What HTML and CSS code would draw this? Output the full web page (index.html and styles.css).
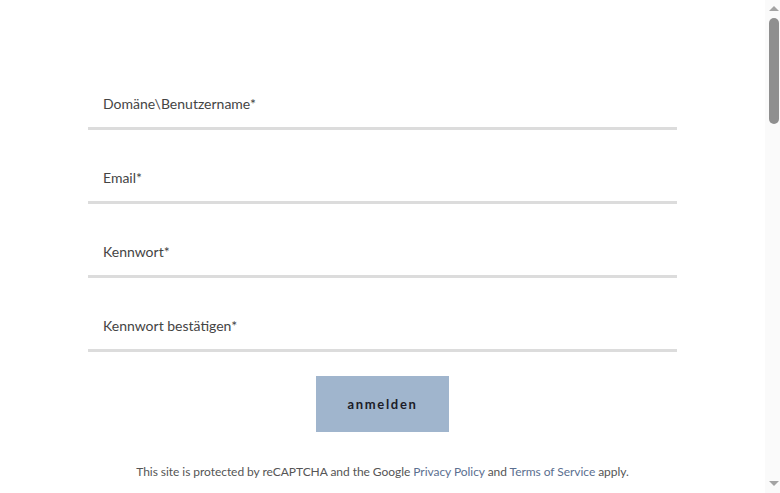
FILE: index.html
```html
<!DOCTYPE html>
<html lang="de">
<head>
<meta charset="utf-8">
<title>Registrieren</title>
<link rel="stylesheet" href="styles.css">
</head>
<body>
<div class="window">
  <main class="page">
    <form class="form">
      <div class="field"><label>Domäne\Benutzername*</label></div>
      <div class="field"><label>Email*</label></div>
      <div class="field"><label>Kennwort*</label></div>
      <div class="field"><label>Kennwort bestätigen*</label></div>
      <div class="actions"><button type="button" class="btn">anmelden</button></div>
      <p class="notice">This site is protected by reCAPTCHA and the Google <a href="#">Privacy Policy</a> and <a href="#">Terms of Service</a> apply.</p>
    </form>
  </main>
  <div class="scrollbar">
    <span class="arrow arrow-up"></span>
    <div class="track"><div class="thumb"></div></div>
    <span class="arrow arrow-down"></span>
  </div>
</div>
</body>
</html>
```
FILE: styles.css
```css
html, body {
  margin: 0;
  padding: 0;
  background: #fff;
  height: 100%;
  overflow: hidden;
}
body {
  font-family: Lato, "Open Sans", sans-serif;
  color: #444;
}
.window {
  display: flex;
  height: 493px;
}
.page {
  flex: 1;
  padding-top: 56px;
  overflow: hidden;
}
.form {
  width: 589px;
  margin: 0 auto;
}
.field {
  border-bottom: 3px solid #dcdcdc;
  display: flex;
  align-items: flex-end;
  padding: 0 15px 15px;
  height: 56px;
}
.field label {
  font-size: 14px;
  line-height: 16px;
  color: #444;
}
.actions {
  display: flex;
  justify-content: center;
  margin-top: 24px;
}
.btn {
  width: 133px;
  height: 56px;
  border: none;
  background: #a0b5cd;
  font-family: Lato, sans-serif;
  font-weight: 700;
  font-size: 13px;
  letter-spacing: 1.7px;
  color: #1c1c28;
  padding: 0;
}
.notice {
  margin: 32px -60px 0;
  text-align: center;
  font-size: 12px;
  line-height: 15px;
  color: #555;
  letter-spacing: -0.05px;
}
.notice a {
  color: #5b6f90;
  text-decoration: none;
}
.scrollbar {
  width: 15px;
  background: #fafafa;
  display: flex;
  flex-direction: column;
  align-items: center;
  padding: 6px 0 7px;
  box-sizing: border-box;
}
.arrow {
  width: 0;
  height: 0;
  border-left: 5px solid transparent;
  border-right: 5px solid transparent;
  margin-left: 2px;
}
.arrow-up {
  border-bottom: 5px solid #a3a3a3;
}
.arrow-down {
  border-top: 5px solid #a3a3a3;
}
.track {
  flex: 1;
  width: 100%;
  display: flex;
  justify-content: center;
  padding-top: 7px;
  padding-left: 2px;
  box-sizing: border-box;
}
.thumb {
  width: 10px;
  height: 106px;
  border-radius: 5px;
  background: #8f8f8f;
}
```
